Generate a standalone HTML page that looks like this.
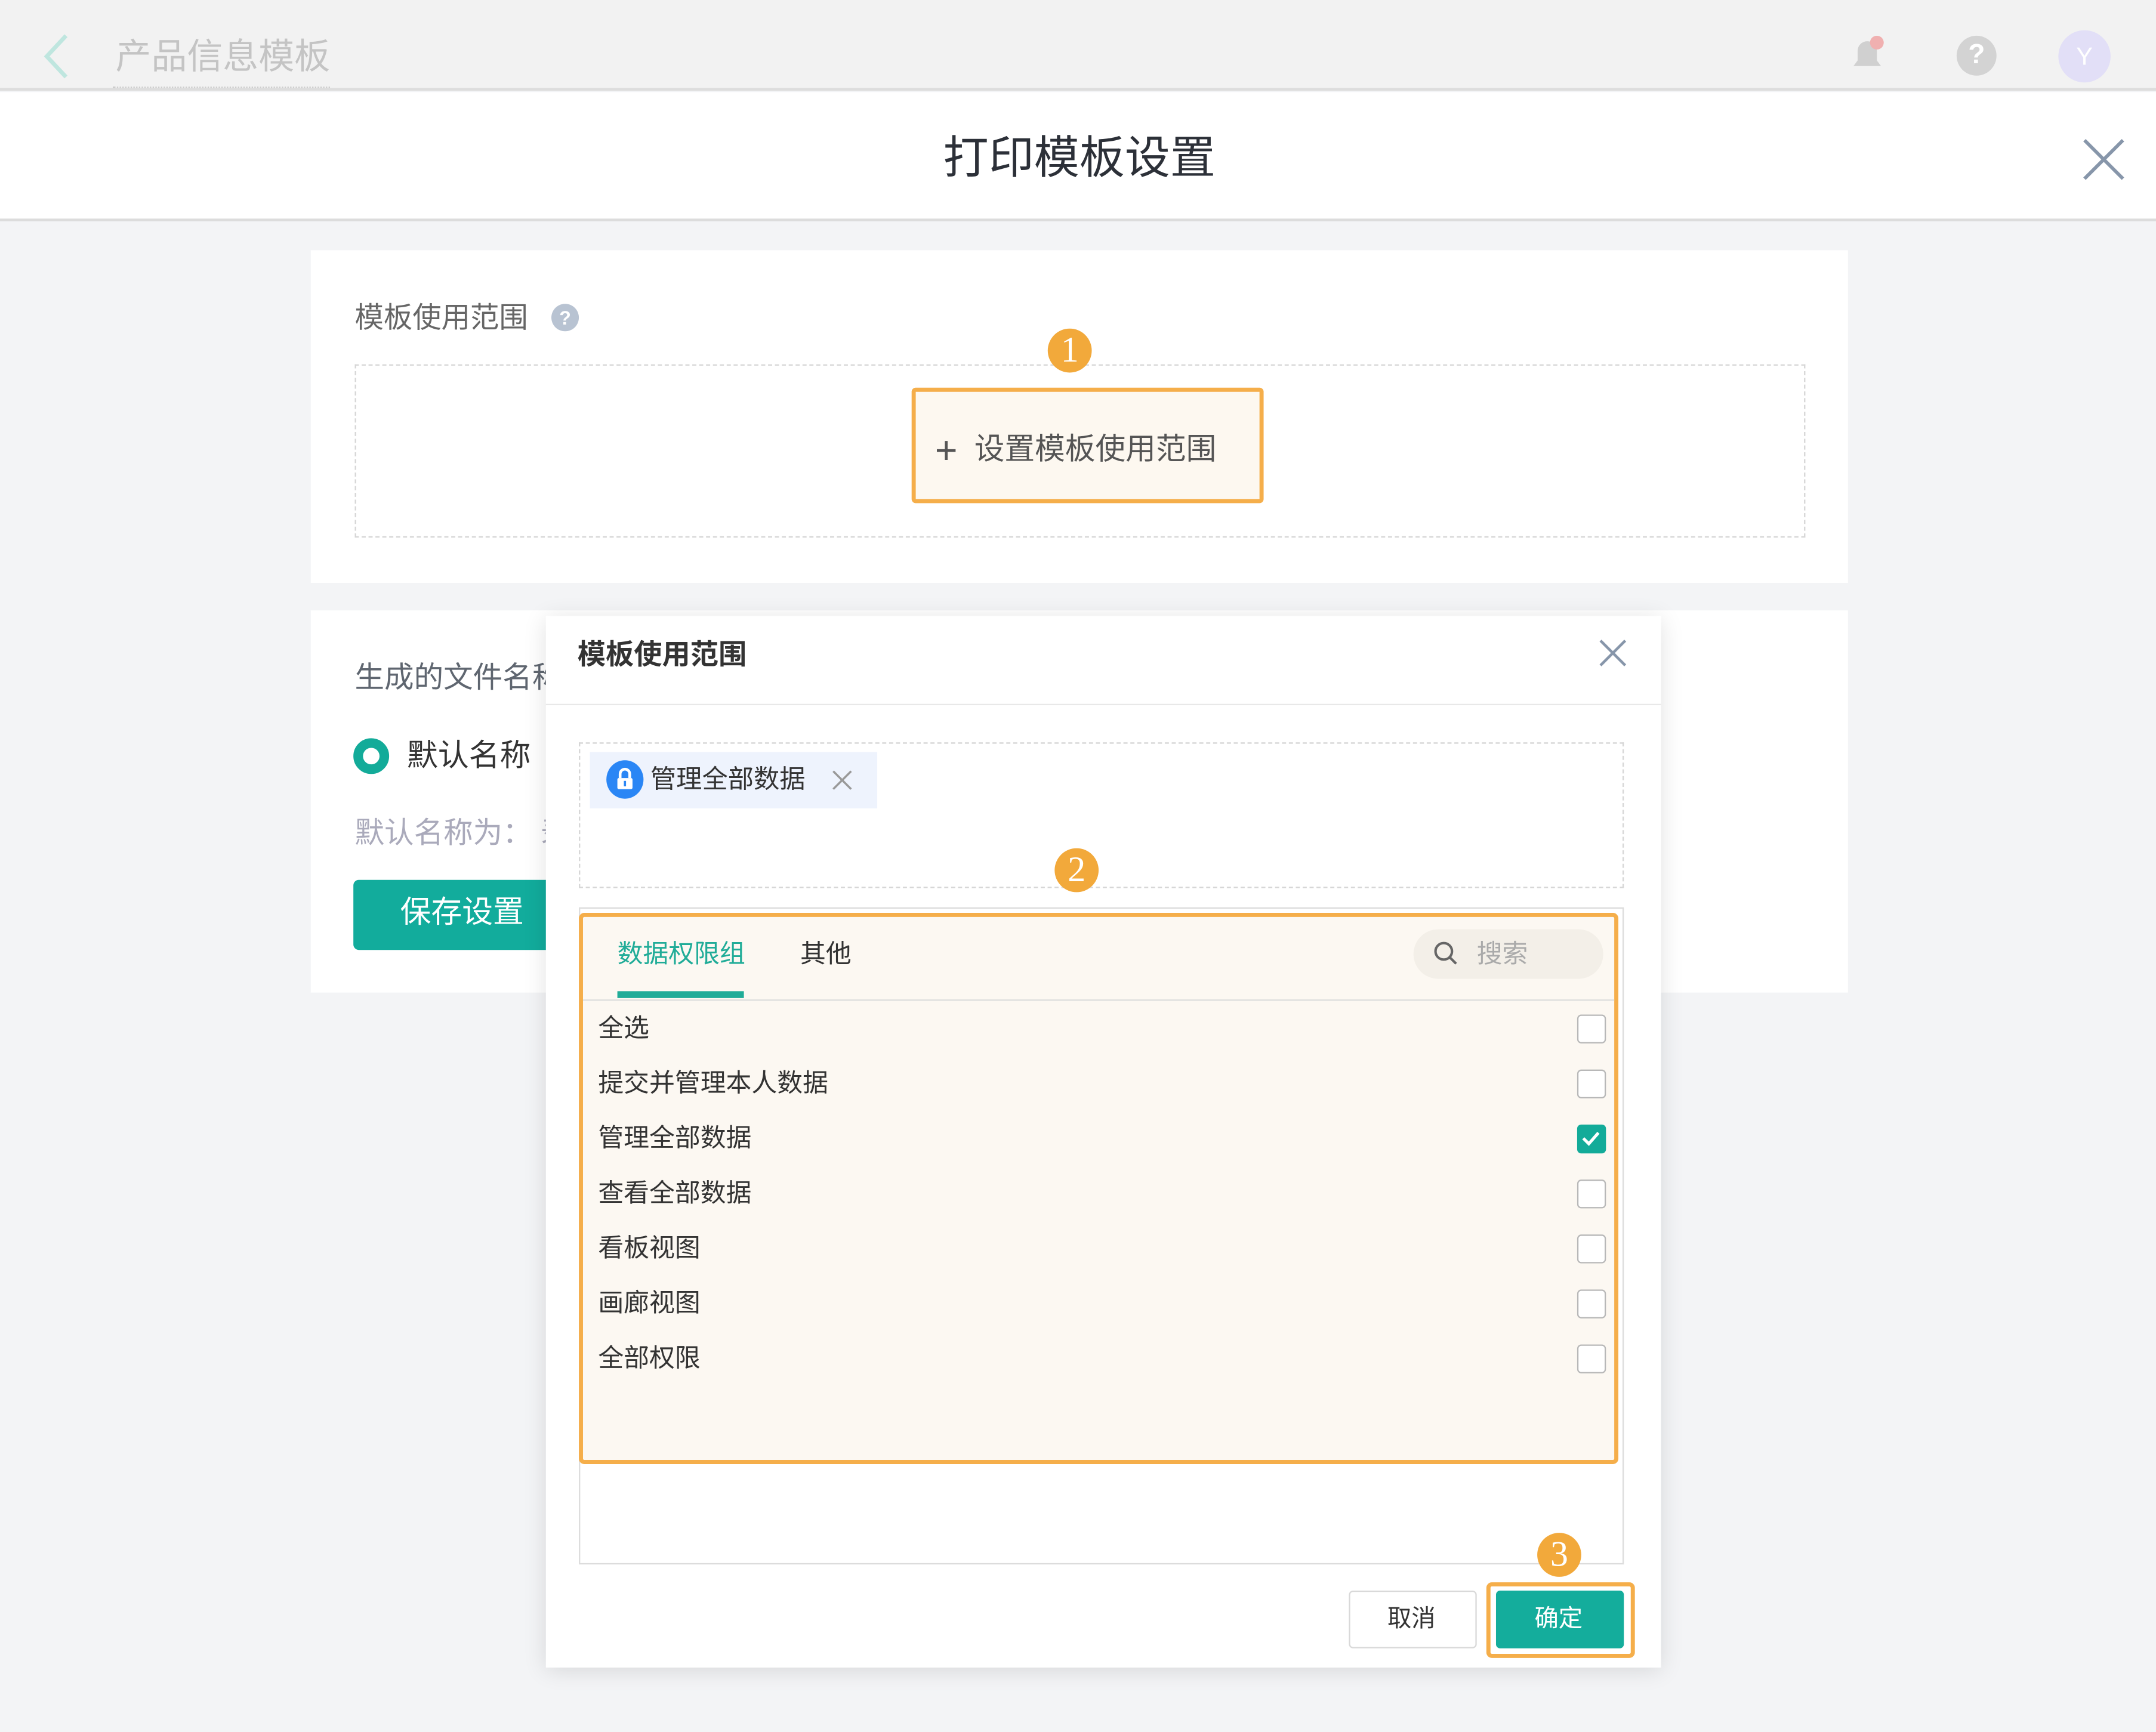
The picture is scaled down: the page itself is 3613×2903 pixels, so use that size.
<!DOCTYPE html>
<html><head><meta charset="utf-8"><style>
*{margin:0;padding:0;box-sizing:border-box}
html,body{width:3613px;height:2902px;overflow:hidden;background:#f3f4f6}
#s{position:absolute;left:0;top:0;width:1568px;height:1260px;transform:scale(2.3042);transform-origin:0 0;font-family:"Liberation Sans","Noto Sans CJK SC",sans-serif;background:#f3f4f6}
.a{position:absolute}
.t{position:absolute;white-space:nowrap;line-height:1}
.badge{position:absolute;width:32px;height:32px;border-radius:50%;background:#f2a93b;color:#fff;font-family:"Liberation Serif",serif;font-size:26px;text-align:center;line-height:32px}
.cb{position:absolute;left:1147px;width:21px;height:21px;border:1.5px solid #b8b8b8;border-radius:3px;background:#fff}
.r{position:absolute;left:435px;font-size:18.6px;color:#333;white-space:nowrap;line-height:1}
</style></head><body><div id="s">
<div class="a" style="left:0;top:0;width:1568px;height:66px;background:#f2f2f2;border-bottom:2px solid #ddd"></div>
<svg class="a" style="left:30px;top:24px" width="22" height="34"><path d="M18 2 L4 17 L18 32" stroke="#bfe6df" stroke-width="3" fill="none"/></svg>
<div class="t" style="left:84px;top:28px;font-size:26px;color:#c4c4c4">产品信息模板</div>
<div class="a" style="left:82px;top:63px;width:158px;border-top:1px dotted #ccc"></div>
<svg class="a" style="left:1344px;top:24px" width="28" height="32"><path d="M4 24 h20 l-3-4 v-7 a7 7 0 0 0-14 0 v7z M11 27 h6" fill="#d0d0d0"/><circle cx="21" cy="7" r="5" fill="#f0b0b0"/></svg>
<div class="a" style="left:1423px;top:26px;width:29px;height:29px;border-radius:50%;background:#d3d3d3;color:#fff;font-size:20px;text-align:center;line-height:29px;font-weight:bold">?</div>
<div class="a" style="left:1497px;top:22px;width:38px;height:38px;border-radius:50%;background:#e2dff7;color:#fff;font-size:18px;text-align:center;line-height:38px">Y</div>
<div class="a" style="left:0;top:67px;width:1568px;height:94px;background:#fff;border-bottom:2px solid #dcdcdc"></div>
<div class="t" style="left:0;width:1570px;text-align:center;top:98px;font-size:33px;color:#2c3038">打印模板设置</div>
<svg class="a" style="left:1514px;top:100px" width="32" height="32"><path d="M2 2 L30 30 M30 2 L2 30" stroke="#8796aa" stroke-width="2.5"/></svg>
<div class="a" style="left:226px;top:182px;width:1118px;height:242px;background:#fff"></div>
<div class="t" style="left:258px;top:221px;font-size:21px;color:#666">模板使用范围</div>
<div class="a" style="left:401px;top:221px;width:20px;height:20px;border-radius:50%;background:#b8c3d2;color:#fff;font-size:14px;text-align:center;line-height:20px;font-weight:bold">?</div>
<div class="a" style="left:258px;top:265px;width:1055px;height:126px;border:1px dashed #d6d6d6"></div>
<div class="a" style="left:663px;top:282px;width:256px;height:84px;border:3px solid #f5ae4a;border-radius:3px;background:#fdf8f0"></div>
<div class="t" style="left:680px;top:314px;font-size:22px;color:#555"><span style="font-size:28px;font-weight:300;vertical-align:-3px">+</span>&nbsp; 设置模板使用范围</div>
<div class="badge" style="left:762px;top:239px">1</div>
<div class="a" style="left:226px;top:444px;width:1118px;height:278px;background:#fff"></div>
<div class="t" style="left:258px;top:483px;font-size:21.5px;color:#5f6670">生成的文件名称</div>
<div class="a" style="left:257px;top:537px;width:26px;height:26px;border-radius:50%;border:7px solid #13ab99;background:#fff"></div>
<div class="t" style="left:296px;top:539px;font-size:22.5px;color:#333">默认名称</div>
<div class="t" style="left:258px;top:596px;font-size:21.5px;color:#aab">默认名称为：&nbsp;录</div>
<div class="a" style="left:257px;top:640px;width:150px;height:51px;border-radius:4px;background:#12ac9c"></div>
<div class="t" style="left:291px;top:653px;font-size:22.5px;color:#fff">保存设置</div>
<div class="a" style="left:397px;top:448px;width:811px;height:765px;background:#fff;box-shadow:0 2px 16px rgba(0,0,0,.12)"></div>
<div class="t" style="left:420px;top:467px;font-size:20.5px;color:#333;font-weight:bold">模板使用范围</div>
<svg class="a" style="left:1162px;top:464px" width="22" height="22"><path d="M2 2 L20 20 M20 2 L2 20" stroke="#8796aa" stroke-width="2"/></svg>
<div class="a" style="left:397px;top:512px;width:811px;border-top:1px solid #e8e8e8"></div>
<div class="a" style="left:421px;top:540px;width:760px;height:106px;border:1px dashed #d6d6d6"></div>
<div class="a" style="left:429px;top:547px;width:209px;height:41px;background:#eef3fd"></div>
<div class="a" style="left:441px;top:553px;width:27px;height:28px;border-radius:50%;background:#2a86f5"></div>
<svg class="a" style="left:446px;top:557px" width="17" height="20"><path d="M5 9 V6 a3.5 3.5 0 0 1 7 0 V9" stroke="#fff" stroke-width="2" fill="none"/><rect x="3" y="9" width="11" height="8" rx="1" fill="#fff"/><rect x="7.7" y="11" width="1.6" height="4" fill="#2a86f5"/></svg>
<div class="t" style="left:473px;top:558px;font-size:18.8px;color:#333">管理全部数据</div>
<svg class="a" style="left:605px;top:560px" width="15" height="15"><path d="M1 1 L14 14 M14 1 L1 14" stroke="#999" stroke-width="1.5"/></svg>
<div class="a" style="left:421px;top:660px;width:760px;height:478px;border:1px solid #dcdcdc"></div>
<div class="a" style="left:421px;top:664px;width:756px;height:401px;border:3px solid #f5ae4a;border-radius:4px;background:#fcf8f2"></div>
<div class="badge" style="left:767px;top:617px">2</div>
<div class="t" style="left:449px;top:685px;font-size:18.6px;color:#20ac98">数据权限组</div>
<div class="a" style="left:449px;top:721px;width:92px;height:5px;background:#20ac98"></div>
<div class="t" style="left:582px;top:685px;font-size:18.6px;color:#333">其他</div>
<div class="a" style="left:1028px;top:676px;width:138px;height:36px;border-radius:18px;background:#f3efe8"></div>
<svg class="a" style="left:1042px;top:684px" width="20" height="20"><circle cx="8" cy="8" r="6" stroke="#666" stroke-width="1.8" fill="none"/><path d="M12.5 12.5 L17 17" stroke="#666" stroke-width="1.8"/></svg>
<div class="t" style="left:1074px;top:685px;font-size:18.6px;color:#aaa">搜索</div>
<div class="a" style="left:424px;top:727px;width:750px;border-top:1px solid #ddd"></div>
<div class="r" style="top:739px">全选</div>
<div class="r" style="top:779px">提交并管理本人数据</div>
<div class="r" style="top:819px">管理全部数据</div>
<div class="r" style="top:859px">查看全部数据</div>
<div class="r" style="top:899px">看板视图</div>
<div class="r" style="top:939px">画廊视图</div>
<div class="r" style="top:979px">全部权限</div>
<div class="cb" style="top:738px"></div>
<div class="cb" style="top:778px"></div>
<div class="cb" style="top:818px;background:#13ab99;border-color:#13ab99"><svg width="18" height="18" style="position:absolute;left:0;top:0"><path d="M3.5 9 L7.5 13 L14.5 5" stroke="#fff" stroke-width="2.2" fill="none"/></svg></div>
<div class="cb" style="top:858px"></div>
<div class="cb" style="top:898px"></div>
<div class="cb" style="top:938px"></div>
<div class="cb" style="top:978px"></div>
<div class="a" style="left:981px;top:1157px;width:93px;height:42px;border:1px solid #d9d9d9;border-radius:3px;background:#fff"></div>
<div class="t" style="left:1009px;top:1169px;font-size:17.5px;color:#333">取消</div>
<div class="a" style="left:1081px;top:1151px;width:108px;height:55px;border:3px solid #f5ae4a;border-radius:4px"></div>
<div class="a" style="left:1088px;top:1157px;width:93px;height:42px;border-radius:3px;background:#14ad9c"></div>
<div class="t" style="left:1116px;top:1169px;font-size:17.5px;color:#fff">确定</div>
<div class="badge" style="left:1118px;top:1115px">3</div>
</div></body></html>
